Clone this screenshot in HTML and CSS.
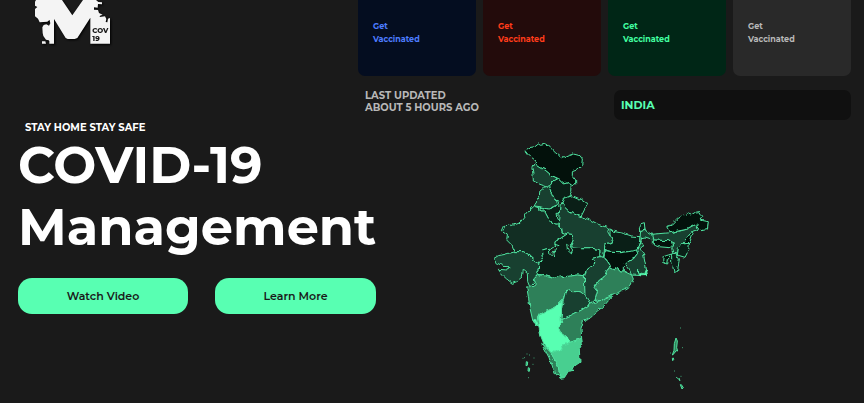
FILE: index.html
```html
<!DOCTYPE html>
<html lang="en">
<head>
<meta charset="utf-8">
<meta name="viewport" content="width=device-width, initial-scale=1">
<title>COVID-19 Management</title>
<link rel="stylesheet" href="styles.css">
</head>
<body>
<main class="page">
  <section class="hero">
    <svg class="logo" viewBox="0 0 240 144" role="img" aria-label="COV 19 logo">
      <path class="logo-shape" d="M6 0H84L115 46 147 0H186L193 6 204 7 204 13 192 12 191 23 180 22 180 29 192 30 195 39 206 44 198 47 197 51 213 49 217 57 215 66 220 67 222 56 228 54 228 131H169V53L130 114 122 117H101L95 114 60 57V131H24V124H34L36 131H46L46 118 49 118 50 128 44 121 36 119 28 108 26 99 25 82 29 75 37 73 45 77 49 70 46 58 49 58 40 65 17 67 12 56 3 49 3 27 10 21 3 17 3 5Z"/>
      <text class="logo-text" x="175" y="100">COV</text>
      <text class="logo-text" x="175" y="124">19</text>
    </svg>
    <p class="tagline">STAY HOME STAY SAFE</p>
    <h1 class="title">COVID-19 Management</h1>
    <div class="actions">
      <button class="button" type="button">Watch Video</button>
      <button class="button" type="button">Learn More</button>
    </div>
  </section>
  <section class="stats">
    <div class="cards">
      <a class="card blue" href="#">Get<br>Vaccinated</a>
      <a class="card red" href="#">Get<br>Vaccinated</a>
      <a class="card green" href="#">Get<br>Vaccinated</a>
      <a class="card gray" href="#">Get<br>Vaccinated</a>
    </div>
    <div class="info">
      <p class="updated">LAST UPDATED<br>ABOUT 5 HOURS AGO</p>
      <h2 class="region">INDIA</h2>
    </div>
    <svg class="map" viewBox="0 0 690 780" role="img" aria-label="Map of India by state">
      <defs>
        <filter id="coast" x="0" y="0" width="690" height="780" filterUnits="userSpaceOnUse" color-interpolation-filters="sRGB">
          <feTurbulence type="fractalNoise" baseFrequency="0.07" numOctaves="1" seed="4" result="n"/>
          <feDisplacementMap in="SourceGraphic" in2="n" scale="14" xChannelSelector="R" yChannelSelector="G"/>
        </filter>
      </defs>
      <g class="states" filter="url(#coast)">
        <path class="l0" d="M120 47 132 38 150 35 160 27 167 31 182 27 195 37 210 52 232 70 250 62 265 57 285 62 292 72 290 92 275 105 262 110 262 122 272 135 272 150 262 152 250 143 235 147 218 130 200 122 180 105 165 97 152 88 150 75 130 60Z"/>
        <path class="l3" d="M152 88 165 97 180 105 200 122 218 130 205 137 195 148 185 155 165 148 145 138 144 118 140 95Z"/>
        <path class="l1" d="M218 130 235 147 250 143 258 155 257 170 262 182 238 190 232 205 220 200 208 192 200 175 190 158 195 148 205 137Z"/>
        <path class="l3" d="M185 155 190 158 200 175 208 192 215 200 218 208 210 215 190 222 165 215 148 213 150 205 162 188 165 165 175 157Z"/>
        <path class="l1" d="M238 190 262 182 285 192 308 208 298 225 288 245 275 242 255 232 237 215 232 205Z"/>
        <path class="l1" d="M165 217 190 222 210 215 218 208 225 215 220 235 213 235 216 250 222 255 218 268 198 265 190 250 182 235 178 228 165 228Z"/>
        <path class="l2" d="M148 213 163 218 165 228 178 228 182 235 190 250 198 265 218 268 228 278 232 292 248 296 230 308 210 322 212 332 193 345 190 340 172 345 175 365 162 385 148 375 130 358 115 350 88 350 80 330 65 315 67 300 52 290 60 272 75 265 80 272 105 262 120 243 130 230Z"/>
        <path class="l3" d="M88 350 115 350 130 358 148 375 162 387 160 402 155 415 158 420 148 430 150 440 135 457 128 440 127 415 115 405 112 425 95 440 82 445 65 432 50 418 40 403 68 405 72 395 55 394 38 385 27 370 40 362 60 358Z"/>
        <path class="l1" d="M172 345 190 340 193 345 195 360 208 362 204 355 222 332 210 328 210 320 230 308 248 296 262 298 265 315 258 330 245 325 247 345 258 355 263 345 256 335 290 338 315 338 345 345 345 365 322 370 330 385 305 402 298 422 280 420 240 425 222 420 205 430 170 420 158 418 155 412 160 402 162 387 175 365Z"/>
        <path class="l3" d="M225 215 232 205 237 215 255 232 288 245 310 252 340 268 372 280 368 290 385 320 360 328 358 350 355 367 345 365 345 345 315 338 290 338 256 335 265 315 262 298 248 296 232 292 230 278 220 268 222 240Z"/>
        <path class="l1" d="M375 278 385 289 415 295 440 303 465 305 465 320 460 335 455 350 430 350 405 353 375 352 358 347 360 328 385 320 375 300Z"/>
        <path class="l0" d="M358 350 375 352 405 353 430 350 455 345 458 355 445 372 425 378 430 392 415 395 415 408 403 408 398 398 385 405 375 395 368 375 358 365Z"/>
        <path class="l1" d="M465 267 478 263 480 285 467 290Z"/>
        <path class="l3" d="M467 290 480 285 495 295 505 300 500 312 480 306 470 308 467 322 480 332 463 340 475 355 482 390 487 420 470 422 440 420 432 405 418 385 425 378 445 372 458 355 455 345 463 330Z"/>
        <path class="l6" d="M460 402 466 414 476 416 482 402 487 422 463 422Z"/>
        <path class="l3" d="M500 298 555 293 605 283 635 267 640 283 620 290 605 310 590 325 585 340 575 355 565 360 560 340 567 325 550 317 505 315Z"/>
        <path class="l0" d="M505 315 550 317 565 328 555 338 520 335 505 330Z"/>
        <path class="l0" d="M545 275 560 270 580 250 605 235 618 240 632 231 645 230 653 245 645 255 670 260 667 283 650 287 635 267 605 283 555 293Z"/>
        <path class="l0" d="M605 310 620 290 624 295 613 325 590 327Z"/>
        <path class="l1" d="M590 327 613 325 611 345 600 367 577 360 580 340Z"/>
        <path class="l1" d="M560 357 572 355 583 372 577 410 567 412 560 380Z"/>
        <path class="l0" d="M560 357 547 372 545 387 533 380 535 365 550 360Z"/>
        <path class="l4" d="M365 407 375 398 390 405 398 398 403 408 415 408 440 420 445 432 438 447 425 462 402 471 385 482 345 497 330 495 337 470 330 480 327 457 343 435 358 425Z"/>
        <path class="l3" d="M345 365 355 367 368 375 375 395 365 407 358 425 343 435 327 457 337 470 330 495 315 508 307 490 298 475 297 430 305 402 330 385 322 370Z"/>
        <path class="l4" d="M125 455 137 458 150 450 150 430 158 420 170 420 205 430 222 420 240 425 280 420 298 422 300 480 285 470 265 470 250 463 240 475 235 495 205 520 160 540 155 560 143 555 135 520 130 485Z"/>
        <path class="l3" d="M250 463 265 470 285 470 300 480 307 490 315 508 290 525 260 540 225 555 230 520 235 495 240 475Z"/>
        <path class="l4" d="M225 555 260 540 290 525 315 508 345 497 385 480 355 515 338 527 315 550 295 558 288 580 290 610 255 622 245 605 225 590 220 575 230 565Z"/>
        <path class="l6" d="M143 555 155 558 160 575 150 567Z"/>
        <path class="l6" d="M232 495 228 555 230 565 220 575 225 590 245 605 255 622 235 630 230 645 210 652 195 650 180 635 168 605 160 570 157 545 180 530 205 520Z"/>
        <path class="l4" d="M170 625 195 650 205 670 220 695 225 727 213 718 205 700 192 668Z"/>
        <path class="l5" d="M195 650 210 652 230 645 235 630 255 622 290 610 292 625 283 640 285 682 270 692 263 705 270 706 250 709 238 728 225 730 220 695 205 670Z"/>
      </g>
      <g class="islands">
        <path d="M126 656v2M117 668h2M133 660h2M146 669h2M113 670h2M124 680l-1 12 4-1 1-10ZM130 698l-1 10 4 1 1-9ZM143 688h2M130 728h2"/>
        <path d="M586 579h2M573 609l-5 17-1 20-5 14 5-4 6-9 5 1-3-10 2-20ZM592 638h2M555 654h2M562 670l1 7 3-3-1-5ZM568 708h2M574 726l4 5M580 732l5 5-3-8M587 724h2M586 749l5 13 4-4-6-9Z"/>
      </g>
    </svg>
  </section>
</main>
</body>
</html>
```
FILE: styles.css
```css
* { box-sizing: border-box; }
html { background: #1a1a1a; }
body {
  margin: 0;
  background: #1a1a1a;
  color: #fff;
  font-family: Montserrat, Inter, "Liberation Sans", sans-serif;
  overflow-x: hidden;
}
p, h1, h2 { margin: 0; }
.page {
  display: grid;
  grid-template-columns: minmax(0, 358fr) minmax(0, 493fr);
  padding-right: 13px;
}
.hero { padding-left: 18px; }
.logo {
  display: block;
  width: 80px;
  margin-left: 16px;
  filter: drop-shadow(1px 1px 1px #000);
}
.logo-shape { fill: #f4f4f4; }
.logo-text { fill: #1a1a1a; font-size: 21px; font-weight: 800; }
.tagline {
  margin: 74px 0 0 7px;
  font-size: 10px;
  line-height: 12px;
  font-weight: 700;
}
.title {
  font-size: 51px;
  line-height: 62px;
  font-weight: 700;
}
.actions {
  display: grid;
  grid-template-columns: 170px 161px;
  gap: 27px;
  width: max-content;
  margin-top: 20px;
}
.button {
  height: 36px;
  border: 0;
  border-radius: 14px;
  background: #58ffb2;
  color: #1a1a1a;
  font: inherit;
  font-size: 11px;
  font-weight: 600;
}
.cards {
  display: grid;
  grid-template-columns: repeat(4, 1fr);
  gap: 7px;
}
.card {
  padding: 20px 15px 30px;
  border-radius: 0 0 7px 7px;
  font-size: 8px;
  line-height: 13px;
  font-weight: 700;
  text-decoration: none;
}
.blue { background: #040d20; color: #4d7cff; }
.red { background: #230b0b; color: #ff3c1a; }
.green { background: #002616; color: #42ffa1; }
.gray { background: #292929; color: #b8b8b8; }
.info {
  display: grid;
  grid-template-columns: 256fr 237fr;
  margin-top: 14px;
}
.updated {
  padding-left: 7px;
  color: #b8b8b8;
  font-size: 10px;
  line-height: 12px;
  font-weight: 700;
}
.region {
  padding: 0 7px;
  border-radius: 7px;
  background: #101010;
  color: #58ffb2;
  font-size: 11px;
  line-height: 30px;
  font-weight: 700;
}
.map {
  display: block;
  width: 230px;
  margin: 15px auto 0 127px;
}
.states path { stroke: #4fe3a0; stroke-width: 3; stroke-linejoin: round; }
.islands path { fill: #2e8059; stroke: #4fe3a0; stroke-width: 3; }
.l0 { fill: #03110b; }
.l1 { fill: #0a1f17; }
.l2 { fill: #122e23; }
.l3 { fill: #184030; }
.l4 { fill: #2e8059; }
.l5 { fill: #48cf90; }
.l6 { fill: #58ffb2; }
```
